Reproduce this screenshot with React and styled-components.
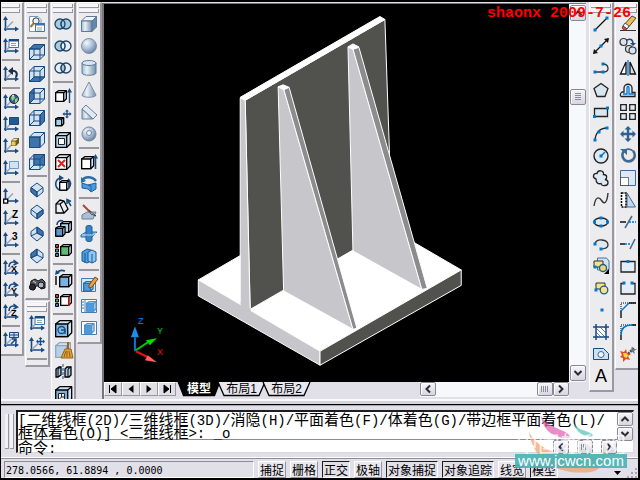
import React from "react";
import styled, { createGlobalStyle } from "styled-components";

const GlobalStyle = createGlobalStyle`
  * {
    box-sizing: border-box;
  }
  body {
    margin: 0;
    background: #000;
    font-family: "Liberation Sans", "Noto Sans CJK SC", sans-serif;
  }
  button {
    font: inherit;
    color: inherit;
    padding: 0;
    margin: 0;
  }
`;

const Window = styled.div`
  position: relative;
  display: flex;
  flex-direction: column;
  width: 100%;
  height: 100vh;
  border: solid #000;
  border-width: 2px 2px 2px 1px;
  background: #e1dfe8;
  color: #000;
  overflow: hidden;
`;

const Workspace = styled.main`
  flex: 1;
  min-height: 0;
  display: flex;
`;

const Dock = styled.aside`
  display: flex;
  align-items: flex-start;
  gap: 1px;
  min-height: 0;
`;

const DockColumn = styled.div`
  display: flex;
  flex-direction: column;
  gap: 1px;
  max-height: 100%;
  overflow: hidden;
`;

const ToolbarFrame = styled.div`
  width: ${(props) => (props.$edge ? "23px" : "25px")};
  padding: ${(props) =>
    props.$edge === "left"
      ? "0 1px 3px 0"
      : props.$edge === "right"
      ? "0 0 3px 1px"
      : "0 0 3px"};
  background: #ecebee;
  border: solid;
  border-color: #fff #9b999f #9b999f #fff;
  border-width: 1px 2px 2px 1px;
  border-left-width: ${(props) => (props.$edge === "left" ? "0" : "1px")};
  border-right-width: ${(props) => (props.$edge === "right" ? "0" : "2px")};
`;

const Gripper = styled.div`
  height: 10px;
  padding-top: 1px;

  &::before,
  &::after {
    content: "";
    display: block;
    height: 3px;
    margin: 0 1px 1px;
    background: #f6f6f8;
    border: solid #98969c;
    border-width: 0 1px 1px 0;
  }
`;

const ToolButton = styled.button`
  display: flex;
  align-items: center;
  justify-content: center;
  width: 100%;
  height: 22px;
  border: 0;
  background: transparent;

  svg {
    flex: none;
    width: 16px;
    height: 16px;
    overflow: visible;
  }
`;

const Separator = styled.hr`
  height: 2px;
  margin: 2px 1px;
  border: solid;
  border-width: 1px 0;
  border-color: #98969c #fff;
`;

const Viewport = styled.section`
  flex: 1;
  min-width: 0;
  display: flex;
  flex-direction: column;
  margin: 1px 3px 0 0;
  padding-bottom: 2px;
  border: solid #77747c;
  border-width: 1px 0 0 2px;
`;

const DrawingRow = styled.div`
  flex: 1;
  min-height: 0;
  display: flex;
`;

const Drawing = styled.div`
  flex: 1;
  min-width: 0;
  background: #000;
  border-left: 1px solid #000;

  svg {
    display: block;
    width: 100%;
    height: 100%;
  }
`;

const ScrollTrack = styled.div`
  display: flex;
  flex-direction: ${(props) => (props.$vertical ? "column" : "row")};
  justify-content: space-between;
  width: ${(props) => (props.$vertical ? "17px" : "auto")};
  padding: ${(props) => (props.$vertical ? "1px 0 1px 1px" : "0")};
  background: #f7f8fb;
`;

const ScrollButton = styled.button`
  display: flex;
  align-items: center;
  justify-content: center;
  width: 16px;
  height: ${(props) => (props.$short ? "14px" : "16px")};
  border: 1px solid #8b8895;
  border-radius: 2px;
  background: linear-gradient(#f5f4f9, #d8d5df);
  box-shadow: inset 1px 1px #fff;

  svg {
    width: 10px;
    height: 10px;
  }
`;

const ThumbSpace = styled.div`
  flex: 1;
  display: flex;
  align-items: flex-start;
  padding-top: 68px;
`;

const TabRow = styled.div`
  display: flex;
  height: 15px;
`;

const TabNav = styled.button`
  width: 18px;
  height: 14px;
  border: 1px solid;
  border-color: #fff #98969e #98969e #fff;
  background: #e1dfe6;

  svg {
    display: block;
    width: 16px;
    height: 12px;
  }
`;

const Tabs = styled.div`
  display: flex;
  flex: 1;
  padding-left: 3px;
`;

const TabButton = styled.button`
  position: relative;
  width: ${(props) => (props.$active ? "40px" : "45px")};
  height: 14px;
  border: 0;
  background: transparent;
  font-size: 12px;
  line-height: 12px;
  font-weight: ${(props) => (props.$active ? "700" : "400")};
  color: ${(props) => (props.$active ? "#fff" : "#000")};
  white-space: nowrap;

  svg {
    position: absolute;
    inset: 0;
    width: 100%;
    height: 100%;
    overflow: visible;
  }

  span {
    position: relative;
  }
`;

const HorizontalScroll = styled(ScrollTrack)`
  width: 31%;
  margin-right: 17px;
`;

const Splitter = styled.div`
  height: 6px;
  border: solid;
  border-width: 2px 0 1px;
  border-color: #fbfbfd transparent #000;
  background: #d4d2da;
`;

const CommandPanel = styled.section`
  display: flex;
  align-items: stretch;
  height: 53px;
  padding: 4px;
  border-top: 1px solid #a6a3ad;
  border-bottom: 1px solid #fff;
`;

const CommandGrip = styled.div`
  display: flex;
  gap: 1px;
  width: 11px;
  padding: 4px 2px 4px 0;

  &::before,
  &::after {
    content: "";
    width: 4px;
    background: #f2f1f5;
    border: solid #98969c;
    border-width: 0 1px 1px 0;
  }
`;

const CommandBox = styled.div`
  flex: 1;
  min-width: 0;
  display: flex;
  background: #fff;
  border: solid;
  border-width: 2px 1px 1px 2px;
  border-color: #1d1c20 #d8d6de #d8d6de #1d1c20;
`;

const CommandText = styled.div`
  flex: 1;
  min-width: 0;
  font-family: "Noto Sans CJK SC", sans-serif;
  font-size: 15px;
  line-height: 13px;
  white-space: nowrap;
`;

const History = styled.div`
  border-bottom: 1px solid #8c8a90;
  padding-bottom: 1px;
`;

const HistoryLine = styled.div`
  height: 13px;
`;

const Ascii = styled.span`
  font-family: "Liberation Mono", monospace;
  font-size: 14px;
  line-height: 0;
  white-space: pre;
`;

const Prompt = styled.div`
  display: flex;
  align-items: flex-start;

  label {
    flex: none;
  }

  input {
    flex: 1;
    min-width: 0;
    height: 13px;
    border: 0;
    padding: 0;
    outline: 0;
    background: transparent;
  }
`;

const PromptScroll = styled.div`
  display: flex;
  justify-content: space-between;
  width: 64px;
`;

const CommandScroll = styled.div`
  width: 16px;
  display: flex;
  flex-direction: column;
  gap: 1px;
`;

const StatusBar = styled.footer`
  display: flex;
  align-items: stretch;
  gap: 4px;
  height: 20px;
  padding: 2px 0 0 3px;
  border-top: 1px solid #8f8c96;
  font-family: "Noto Sans CJK SC", sans-serif;
  font-size: 12px;
  line-height: 14px;
`;

const Coordinates = styled.output`
  width: 250px;
  padding-left: 1px;
  border: 1px solid;
  border-color: #8f8c96 #fff #fff #8f8c96;
  font-family: "DejaVu Sans Mono", monospace;
  font-size: 10px;
  line-height: 17px;
  white-space: pre;
`;

const StatusToggle = styled.button`
  padding: 0 1px;
  border: solid;
  border-width: 1px;
  border-color: ${(props) =>
    props.$pressed ? "#1d1c20 #fff #fff #1d1c20" : "#fff #97949c #97949c #fff"};
  background: ${(props) => (props.$pressed ? "#e1dfe8" : "#eae8ee")};
  white-space: nowrap;
`;

const StatusEnd = styled.div`
  flex: 1;
  display: flex;
  justify-content: flex-end;
  align-items: flex-end;

  svg {
    width: 24px;
    height: 14px;
  }
`;

const DateStamp = styled.div`
  position: absolute;
  top: 4px;
  right: 7px;
  font-family: "Liberation Mono", monospace;
  font-size: 15px;
  line-height: 16px;
  font-weight: 700;
  color: #f00;
  pointer-events: none;
`;

const SiteMark = styled.div`
  position: absolute;
  right: 11px;
  bottom: 10px;
  width: 112px;
  pointer-events: none;

  svg {
    position: absolute;
    left: 14px;
    bottom: -10px;
    width: 96px;
    height: 62px;
  }
`;

const SiteName = styled.div`
  position: relative;
  font-family: "Noto Sans CJK SC", sans-serif;
  font-size: 22px;
  line-height: 24px;
  color: rgba(255, 255, 255, 0.75);
  text-align: center;
`;

const SiteAddress = styled.div`
  position: relative;
  height: 14px;
  background: rgba(72, 180, 182, 0.9);
  color: #fff;
  font-size: 15px;
  line-height: 14px;
  text-align: center;
`;

const NAVY = "#194a80";
const BLUE = "#3f74aa";
const PALE = "#d3e2f0";
const SKY = "#4a9be0";
const DOT = "#0078d0";

const Axes = ({ children }) => (
  <>
    <path d="M2.5 3v12M1 13h12" stroke={NAVY} strokeWidth="1.6" fill="none" />
    <path d="M0 4l2.5-4L5 4zM12 10.4l4 2.6-4 2.6z" fill={NAVY} />
    <path d="M3 12.5L10 5.5" stroke="#9aa8bc" strokeWidth="1.6" />
    {children}
  </>
);

const AxisLetter = ({ children }) => (
  <text
    x="9"
    y="8"
    fontFamily="Liberation Sans, sans-serif"
    fontSize="10"
    fontWeight="700"
  >
    {children}
  </text>
);

const AxisTurn = ({ letter }) => (
  <Axes>
    <path
      d="M6 7C6 2 10 1 13 3M10.5 0l4 3-4 2"
      stroke={NAVY}
      strokeWidth="1.5"
      fill="none"
    />
    <text
      x="8"
      y="12"
      fontFamily="Liberation Sans, sans-serif"
      fontSize="9"
      fontWeight="700"
    >
      {letter}
    </text>
  </Axes>
);

const Dialog = () => (
  <g>
    <path d="M6 1.5h9.5v8H6z" fill="#fff" stroke={BLUE} />
    <path d="M6 1h10v2.5H6z" fill={NAVY} />
    <path d="M8 5.5h5M8 7.5h5" stroke="#8aa" />
  </g>
);

const faces = {
  front: "M.5 5H11v10.5H.5z",
  back: "M5 .5h10.5V11H5z",
  top: "M.5 5L5 .5h10.5L11 5z",
  bottom: "M.5 15.5L5 11h10.5L11 15.5z",
  left: "M.5 5L5 .5V11L.5 15.5z",
  right: "M11 5L15.5.5V11L11 15.5z",
};

const ViewCube = ({ face }) => (
  <g stroke={NAVY} strokeLinejoin="round">
    <path d="M.5 5L5 .5h10.5V11L11 15.5H.5z" fill={PALE} />
    {face !== "front" && <path d="M5 .5V11h10.5M5 11L.5 15.5" fill="none" />}
    <path d={faces[face]} fill={BLUE} />
    <path d="M.5 5H11v10.5M11 5L15.5.5" fill="none" />
  </g>
);

const IsoCube = ({ turn }) => (
  <g stroke={NAVY} strokeLinejoin="round">
    <path d="M8 1l6 4.500v4.500l-6 5-6-5V5.500z" fill={PALE} />
    {turn === "sw" && <path d="M2 5.500l6 4.500v5l-6-5z" fill={BLUE} />}
    {turn === "se" && <path d="M14 5.500l-6 4.500v5l6-5z" fill={BLUE} />}
    {turn === "ne" && <path d="M8 1l6 4.500v4.500L8 7z" fill={BLUE} />}
    {turn === "nw" && <path d="M8 1L2 5.500v4.500l6-3z" fill={BLUE} />}
    <path
      d={turn[0] === "s" ? "M2 5.500l6 4.500 6-4.500M8 10v5" : "M2 10l6-3 6 3M8 7V1"}
      fill="none"
    />
  </g>
);

const Solid = ({ x = 0, y = 0, size = 10, fill = "#8fc0e8", color = "#000" }) => {
  const d = size / 3;
  return (
    <g stroke={color} strokeWidth="1.3" strokeLinejoin="round">
      <path
        d={`M${x + 0.7} ${y + d}l${d}-${d - 0.7}h${size}v${size}l-${d} ${d}h-${size}z`}
        fill={PALE}
      />
      <path d={`M${x + 0.7} ${y + d}h${size}v${size + 0.7}h-${size}z`} fill={fill} />
      <path d={`M${x + size + 0.7} ${y + d}l${d}-${d - 0.7}`} fill="none" />
    </g>
  );
};

const Rings = ({ left = "none", right = "none", lens = "none" }) => (
  <g stroke="#1b4668" strokeWidth="1.3">
    <circle cx="5" cy="8" r="5" fill={left} />
    <circle cx="11" cy="8" r="5" fill={right} />
    <path d="M8 4a5 5 0 010 8 5 5 0 010-8z" fill={lens} />
  </g>
);

const Dots = ({ points }) =>
  points.map(([x, y]) => (
    <rect key={`${x}-${y}`} x={x - 1.5} y={y - 1.5} width="3" height="3" fill={DOT} />
  ));

const FourWay = ({ x = 8, y = 8, r = 7, color = NAVY }) => (
  <g transform={`translate(${x} ${y}) scale(${r / 8})`} fill={color}>
    <path d="M0-8l3.500 3.500H1.200v3.300h3.300V-3.500L8 0 4.500 3.500V1.200H1.200v3.300h2.300L0 8l-3.500-3.500h2.300V1.200h-3.300v2.300L-8 0l3.500-3.500v2.300h3.300v-3.300h-2.300z" />
  </g>
);

const Stack = () => (
  <>
    <path d="M.5 2.5h3v3h-3z" fill="#d23a3a" stroke="#000" />
    <path d="M.5 7h3v3h-3z" fill="#39b36b" stroke="#000" />
    <path d="M.5 11.5h3v3h-3z" fill="#2d7fc7" stroke="#000" />
  </>
);

const icons = {
  ucs: <Axes />,
  "ucs dialog": (
    <Axes>
      <Dialog />
    </Axes>
  ),
  "ucs previous": (
    <Axes>
      <path d="M13 11c2-4 0-7-5-6" stroke="#1c2f4a" strokeWidth="2" fill="none" />
      <path d="M5 5l5-4v8z" fill="#1c2f4a" />
    </Axes>
  ),
  "ucs world": (
    <Axes>
      <circle cx="11" cy="5" r="4.5" fill="#2b5f9c" stroke="#222" />
      <path d="M8 3l3-2 1 3-3 3zM12 5l3-1-1 4-2 1z" fill="#9ccf7a" />
      <path d="M9 2l2-1" stroke="#fff" />
    </Axes>
  ),
  "ucs object": (
    <Axes>
      <path d="M6.5 1.5h9v7h-9z" fill="#1e5c94" stroke={NAVY} />
    </Axes>
  ),
  "ucs face": (
    <Axes>
      <path d="M8 3l3-3h5v5l-3 3H8z" fill="#6b5a1e" />
      <path d="M8.5 3.5h4v4h-4z" fill="#e8cf60" />
      <path d="M9 2.5L11 .8h4l-2 1.7z" fill="#fbf0b0" />
    </Axes>
  ),
  "ucs view": (
    <Axes>
      <path d="M6.5 1.5h9v7h-9z" fill={PALE} stroke="#6d99c4" />
    </Axes>
  ),
  "ucs origin": (
    <Axes>
      <path d="M.7 11.2h4v4h-4z" fill="#fff" stroke="#000" strokeWidth="1.3" />
    </Axes>
  ),
  "ucs z vector": (
    <Axes>
      <AxisLetter>Z</AxisLetter>
    </Axes>
  ),
  "ucs 3 point": (
    <Axes>
      <AxisLetter>3</AxisLetter>
    </Axes>
  ),
  "rotate x": <AxisTurn letter="X" />,
  "rotate y": <AxisTurn letter="Y" />,
  "rotate z": <AxisTurn letter="Z" />,
  "ucs apply": (
    <Axes>
      <path d="M6.5.5h9v5h-9zM11 .5v5M6.5 3h9" fill={PALE} stroke={NAVY} />
      <path d="M8 12l5-5M9 7h4v4" stroke={NAVY} strokeWidth="1.5" fill="none" />
    </Axes>
  ),
  "named views": (
    <>
      <path d="M.5 15.5V.5H9L12 3.5v12z" fill="#fff" stroke="#7895b5" />
      <circle cx="7" cy="5" r="3.2" fill="#e6f0fa" stroke="#333" />
      <path d="M5 7L1.5 11" stroke="#a8742c" strokeWidth="2" />
      <path d="M6.5 7.5h9v8h-9z" fill="#fff" stroke={BLUE} />
      <path d="M6 7h10v2.5H6z" fill={BLUE} />
      <path d="M8 12h5M8 14h5" stroke="#8aa" />
    </>
  ),
  "top view": <ViewCube face="top" />,
  "bottom view": <ViewCube face="bottom" />,
  "left view": <ViewCube face="left" />,
  "right view": <ViewCube face="right" />,
  "front view": <ViewCube face="front" />,
  "back view": <ViewCube face="back" />,
  "sw isometric": <IsoCube turn="sw" />,
  "se isometric": <IsoCube turn="se" />,
  "ne isometric": <IsoCube turn="ne" />,
  "nw isometric": <IsoCube turn="nw" />,
  camera: (
    <g stroke="#111">
      <path d="M2 5l4-2 3 2 4-2 3 3v6l-4 1-2-3H7l-2 4-4-1z" fill="#555c66" />
      <circle cx="3.5" cy="11" r="3" fill="#252a30" />
      <circle cx="12" cy="9" r="3" fill="#aab4c0" />
      <path d="M4 5l3 2" stroke="#ccd" />
    </g>
  ),
  "ucs move": (
    <Axes>
      <FourWay x={11.5} y={4.5} r={4.5} />
    </Axes>
  ),
  union: <Rings left="#a9cbe0" right="#a9cbe0" lens="#a9cbe0" />,
  subtract: <Rings left="#a9cbe0" lens="#eef2f6" />,
  intersect: <Rings lens="#a9cbe0" />,
  "extrude faces": (
    <>
      <Solid y={2} size={8} fill="#fff" />
      <path d="M14.5 15V3" stroke={NAVY} strokeWidth="1.4" />
      <path d="M12 4.5L14.5 0 17 4.5z" fill={NAVY} />
    </>
  ),
  "move faces": (
    <>
      <Solid y={7} size={6} fill="#a8d0ee" />
      <FourWay x={12} y={4} r={4.5} />
    </>
  ),
  "offset faces": (
    <>
      <Solid size={11} fill="#b8d6ee" />
      <path d="M3.5 6.5h6v6h-6z" fill="#fff" stroke="#222" />
    </>
  ),
  "delete faces": (
    <>
      <Solid size={11} fill="#fff" />
      <path d="M3 6l7 7M10 6l-7 7" stroke="#d22" strokeWidth="2" />
    </>
  ),
  "rotate faces": (
    <>
      <Solid x={4} y={4} size={7} fill="#fff" />
      <path d="M4 14C-1 10 0 4 5 2M13 13c4-4 3-8 0-10" stroke={NAVY} strokeWidth="1.6" fill="none" />
      <path d="M4-1l5 3-5 3z" fill={NAVY} />
    </>
  ),
  "taper faces": (
    <>
      <path d="M1 6l4-4 4 1 4 8-4 4H1z" fill="#e8eef4" stroke="#000" strokeWidth="1.3" />
      <path d="M1 6h4l4 9M5 6l4-3" fill="none" stroke="#000" strokeWidth="1.2" />
      <path d="M16 8l-3-5M12 6V1.5l4 2" stroke={NAVY} strokeWidth="1.5" fill="none" />
    </>
  ),
  "copy faces": (
    <>
      <Solid x={5} y={1} size={8} fill="#b4d4ec" />
      <Solid x={0} y={6} size={7} fill="#5f98c8" />
      <path d="M2 5c0-4 3-5 6-4" stroke={NAVY} strokeWidth="1.6" fill="none" />
    </>
  ),
  "color faces": (
    <>
      <Stack />
      <Solid x={5} y={2} size={8} fill="#5cba74" />
    </>
  ),
  "copy edges": (
    <>
      <Solid x={4} y={4} size={9} fill="#76b2e4" />
      <path d="M1 15V6" stroke="#000" strokeWidth="1.4" />
      <path d="M2 3c2-3 5-3 8-2" stroke={NAVY} strokeWidth="1.8" fill="none" />
      <path d="M0 5l1-5 4 3z" fill={NAVY} />
    </>
  ),
  "color edges": (
    <>
      <Stack />
      <Solid x={5} y={2} size={8} fill="#fff" />
      <path d="M14 5v9" stroke="#e02020" strokeWidth="1.4" />
    </>
  ),
  imprint: (
    <>
      <Solid size={12} fill="#84bce8" />
      <circle cx="6.5" cy="10" r="3.5" fill="none" stroke={NAVY} strokeWidth="1.3" />
      <path d="M6 10h4v4" fill="none" stroke={NAVY} strokeWidth="1.3" />
    </>
  ),
  clean: (
    <>
      <Solid size={11} fill="#b8cfe6" color="#8fa7c2" />
      <path d="M12 0h2v7h-2z" fill="#a9601c" />
      <path d="M10 7h6l2 9H6z" fill="#e0a43a" stroke="#93601a" />
      <path d="M9 15l2-6M12 15V9M15 15l-1-6" stroke="#93601a" />
    </>
  ),
  separate: (
    <>
      <path d="M1 5l3-2h2v8l-3 2H1zM10 5l2-2h4v8l-2 2h-4z" fill="#a5c8e6" stroke="#000" strokeWidth="1.3" />
      <path d="M3 13V5l3-2M13 13V5l3-2" fill="none" stroke="#000" />
      <path d="M8 0v16" stroke={NAVY} strokeDasharray="3 1" />
    </>
  ),
  shell: (
    <>
      <Solid size={12} fill="#7fb0dc" />
      <path d="M3.5 7.5h6V14h-6z" fill="#eee" stroke="#222" />
      <path d="M3.5 14l3-3h3M6.5 11V7.5" fill="none" stroke="#222" />
    </>
  ),
  box: (
    <g stroke="#5f7894" strokeLinejoin="round">
      <path d="M.5 5L5 .5h10.500L11 5z" fill="#eef4fa" />
      <path d="M.5 5H11v10.500H.5z" fill="url(#steel)" />
      <path d="M11 5L15.500.5V11L11 15.500z" fill="#6488ac" />
    </g>
  ),
  sphere: <circle cx="8" cy="8" r="7.5" fill="url(#ball)" stroke="#7d90a8" />,
  cylinder: (
    <g stroke="#627a95">
      <path d="M1 3v10c0 3 14 3 14 0V3z" fill="url(#steel)" />
      <ellipse cx="8" cy="3" rx="7" ry="2.5" fill="#d9e6f2" />
    </g>
  ),
  cone: <path d="M8 0L1 13c0 3 14 3 14 0z" fill="url(#steel)" stroke="#7a8ea6" />,
  wedge: (
    <g stroke="#6c8098" strokeLinejoin="round">
      <path d="M1 5l4-4 11 10-4 4z" fill="#dfe9f3" />
      <path d="M1 5l11 10H1z" fill="url(#steel)" />
    </g>
  ),
  torus: (
    <g stroke="#7388a0">
      <circle cx="8" cy="8" r="7" fill="url(#ball)" />
      <circle cx="8" cy="7" r="2.5" fill="#eef1f5" />
    </g>
  ),
  extrude: (
    <>
      <Solid y={2} size={9} fill="#fff" />
      <path d="M14.5 15V3" stroke={NAVY} strokeWidth="1.6" />
      <path d="M12 4.5L14.5 0 17 4.5z" fill={NAVY} />
    </>
  ),
  revolve: (
    <>
      <path d="M1 5c2-5 10-5 14 0" fill="none" stroke="#2b6da8" strokeWidth="2.5" />
      <path d="M1 7l6 2 8-2v6l-5 3-3-3-6-1z" fill={SKY} stroke="#245f9a" />
      <path d="M7 9l3 1v5" fill="none" stroke="#245f9a" />
      <path d="M0 1v6l5-2z" fill="#2b6da8" />
    </>
  ),
  slice: (
    <>
      <path d="M1 11l5-3h9l-3 7H1z" fill="#aac0d6" stroke="#68809a" />
      <path d="M2 1l7 7" stroke="#a34a3c" strokeWidth="2" />
      <path d="M8 6l7 6-5-2z" fill="#eee" stroke="#444" />
    </>
  ),
  section: (
    <>
      <path d="M0 9l5-3h11l-5 5H0z" fill="#6fb2ea" stroke="#316c9f" />
      <path d="M5 1c0-2 6-2 6 0v13c0 2-6 2-6 0z" fill="#3682c6" stroke="#235c92" />
      <path d="M1 9h11l3-2" fill="none" stroke="#b9dcf7" />
    </>
  ),
  interfere: (
    <g stroke="#1e5a92">
      <path d="M1 4l5-3 4 1v11l-4 2-5-2z" fill="#4a9be0" />
      <path d="M7 4l4-2 4 2v9l-4 2-4-2z" fill="#8cc6f4" />
      <path d="M4 5v10M11 6v9" fill="none" />
    </g>
  ),
  "setup drawing": (
    <>
      <path d="M.5 2.5h14v13H.5z" fill="#d7e8f6" stroke="#4a7bae" />
      <Solid x={2} y={5} size={7} fill={SKY} color="#2b6da8" />
      <path d="M8 9l6-8 3 2-6 8-3 1z" fill="#e7a23c" stroke="#7c4a16" />
    </>
  ),
  "setup view": (
    <>
      <path d="M.5 1.5h15v13H.5zM4 1.5v13" fill="#fff" stroke="#4a7bae" />
      <path d="M1 4h2M1 7h2M1 10h2" stroke="#4a7bae" />
      <Solid x={5} y={3} size={7} fill={SKY} color="#4d92cf" />
    </>
  ),
  "setup profile": (
    <>
      <path d="M.5 1.5h15v13H.5z" fill="#fff" stroke="#4a7bae" />
      <Solid x={3} y={3} size={7} fill={SKY} color="#4d92cf" />
    </>
  ),
  line: (
    <>
      <path d="M2 14L14 2" stroke="#111" strokeWidth="1.2" />
      <Dots points={[[2, 14], [14, 2]]} />
    </>
  ),
  "construction line": (
    <>
      <path d="M1 15L15 1" stroke="#111" strokeWidth="1.2" />
      <path d="M0 16l1-5 4 4zM16 0l-5 1 4 4z" fill="#111" />
      <Dots points={[[8, 8]]} />
    </>
  ),
  polyline: (
    <>
      <path d="M2 12h9c6 0 5-8-1-8" stroke="#333" strokeWidth="1.3" fill="none" />
      <Dots points={[[2, 12], [10, 12], [10, 4]]} />
    </>
  ),
  polygon: (
    <path d="M8 1.5l7 5-3 8H4l-3-8z" fill="#d8e6f0" stroke="#222" strokeWidth="1.3" />
  ),
  rectangle: (
    <>
      <path d="M1.5 4.5h13v8h-13z" fill="#dbe8f2" stroke="#222" strokeWidth="1.3" />
      <Dots points={[[1.5, 12.5], [14.5, 4]]} />
    </>
  ),
  arc: (
    <>
      <path d="M2 15C2 7 7 2 14 2" fill="none" stroke="#222" strokeWidth="1.3" />
      <Dots points={[[2, 14], [6, 6], [14, 2]]} />
    </>
  ),
  circle: (
    <>
      <circle cx="8" cy="8" r="7" fill="#dce8f2" stroke="#222" strokeWidth="1.4" />
      <path d="M8 8l4-4" stroke={DOT} strokeWidth="1.5" />
      <Dots points={[[8, 8]]} />
    </>
  ),
  "revision cloud": (
    <path
      d="M3 9C-1 8 0 3 4 3.500 5-.5 11 0 10.500 4.500c4 0 4 4 1.500 5 4 .5 4 6 0 6-2 .5-4-.5-4-2-3 1-5-1-5-4.500z"
      fill="#dce8f2"
      stroke="#222"
      strokeWidth="1.3"
    />
  ),
  spline: (
    <path d="M1 14C3 2 7 6 9 9s5 3 6-8" fill="none" stroke="#333" strokeWidth="1.4" />
  ),
  ellipse: (
    <>
      <ellipse cx="8" cy="8" rx="7" ry="4" fill="#dce8f2" stroke="#222" strokeWidth="1.3" />
      <Dots points={[[1.5, 8], [8, 4], [14.5, 8], [8, 12]]} />
    </>
  ),
  "ellipse arc": (
    <>
      <path d="M2 8c1-6 13-5 13 1 0 3-4 4-8 4" fill="#dce8f2" stroke="#333" strokeWidth="1.3" />
      <Dots points={[[2, 8], [8, 13]]} />
    </>
  ),
  "insert block": (
    <>
      <path d="M4.5 0h9L16 3v9H4.5z" fill={PALE} stroke={BLUE} />
      <path d="M1 3h9v6H1z" fill="#f3e38a" stroke="#333" />
      <circle cx="10" cy="10" r="3.5" fill="#e9d96a" stroke="#245a8c" strokeWidth="1.3" />
      <path d="M16 11v5h-5z" />
      <Dots points={[[2, 9]]} />
    </>
  ),
  "make block": (
    <>
      <path d="M3 3h9v6H3z" fill="#f3e38a" stroke="#333" />
      <circle cx="11" cy="10" r="3.8" fill="#f3e38a" stroke="#245a8c" strokeWidth="1.3" />
      <Dots points={[[3, 10]]} />
    </>
  ),
  point: <Dots points={[[9, 8]]} />,
  hatch: (
    <>
      <path d="M3 3h10v10H3z" fill="#fff" />
      <path d="M3 8l5 5M3 4l9 9M7 3l6 6M3 11l2 2M11 3l2 2" stroke="#5c87b3" />
      <path d="M3 0v16M13 0v16M0 3h16M0 13h16" stroke={NAVY} strokeWidth="1.5" />
    </>
  ),
  region: (
    <>
      <path d="M.5 2.5h10l5 5v6H.5z" fill="#cfe0ef" stroke={NAVY} />
      <circle cx="8" cy="8.5" r="3" fill="#f2f4f8" stroke="#40688f" />
    </>
  ),
  text: (
    <text
      x="8"
      y="14"
      textAnchor="middle"
      fontFamily="Liberation Sans, sans-serif"
      fontSize="18"
    >
      A
    </text>
  ),
  erase: (
    <>
      <path d="M0 14.5h16" stroke="#333" />
      <path d="M3 10L12 0l4 2-9 11z" fill="#e9c25c" stroke="#604020" />
      <path d="M3 10l2-3 4 3-2 3z" fill="#fff" stroke="#555" />
      <path d="M3 10c-2 3 1 5 4 3z" fill="#dd5656" stroke="#733" />
    </>
  ),
  copy: (
    <g stroke="#333" strokeWidth="1.2">
      <circle cx="3.5" cy="4" r="3.5" fill="#d8e5f0" />
      <circle cx="9" cy="11" r="3.5" fill="#d8e5f0" />
      <circle cx="12.5" cy="12.5" r="3.5" fill="#d8e5f0" />
      <path d="M7 2c4-2 6 0 6 4" stroke={NAVY} strokeWidth="1.6" fill="none" />
      <path d="M10 5h6l-3 3z" fill={NAVY} stroke="none" />
    </g>
  ),
  mirror: (
    <g strokeWidth="1.3">
      <path d="M6 2v12H.5z" fill="#fff" stroke="#111" />
      <path d="M10 2v12h5.500z" fill="#cfe0ee" stroke="#111" />
      <path d="M8 0v16" stroke={DOT} />
    </g>
  ),
  offset: (
    <g fill="none" strokeWidth="1.3">
      <path d="M1 14.5h14v-4h-3V6c0-5-8-5-8 0v4H2c-2 1-2 4-1 4.500z" stroke="#222" fill="#e3edf7" />
      <path d="M3 12h4V6c0-2 2-2 2 0v6h5" stroke={DOT} />
    </g>
  ),
  array: (
    <path
      d="M.7.7h5.600v5.600H.7zM9.700.7h5.600v5.600H9.700zM.7 9.700h5.600v5.600H.7zM9.700 9.700h5.600v5.600H9.700z"
      fill="#dfeaf3"
      stroke="#222"
      strokeWidth="1.3"
    />
  ),
  move: <FourWay r={8} color="#2f6091" />,
  rotate: (
    <>
      <path d="M4 3a6.200 6.200 0 109-.2" fill="none" stroke="#3f6a94" strokeWidth="2.6" />
      <path d="M4 3C7 0 11 1 13 3" fill="none" stroke="#3f6a94" strokeWidth="1.6" />
      <path d="M0 1h7v6z" fill="#3f6a94" />
    </>
  ),
  scale: (
    <>
      <path d="M.5.5h15v15H.5z" fill="#dce8f4" stroke="#3f6a94" />
      <path d="M.5 7.5h8v8h-8z" fill="#fff" stroke="#000" strokeDasharray="1 1" />
    </>
  ),
  stretch: (
    <>
      <path d="M7 1l8.500 14H7z" fill="#c3d9eb" stroke="#3f6a94" />
      <path d="M1.5 1H6v14H1.500z" fill="#fff" stroke="#000" strokeWidth="1.5" strokeDasharray="2 1" />
    </>
  ),
  trim: (
    <>
      <path d="M0 8h6" stroke="#111" strokeWidth="1.5" />
      <path d="M9 8h7" stroke={DOT} strokeWidth="1.5" strokeDasharray="2 1" />
      <path d="M5 14L12 2" stroke="#3f6a94" strokeWidth="1.5" />
    </>
  ),
  extend: (
    <>
      <path d="M0 8h5" stroke="#111" strokeWidth="1.5" />
      <path d="M5 8h6" stroke={DOT} strokeWidth="1.5" strokeDasharray="2 1" />
      <path d="M10 13l5-10" stroke="#3f6a94" strokeWidth="1.5" />
    </>
  ),
  "break at point": (
    <>
      <path d="M1 3.5h14V14H1z" fill="#e3edf7" stroke="#222" strokeWidth="1.3" />
      <Dots points={[[8, 3.5]]} />
    </>
  ),
  break: (
    <>
      <path d="M4 3.5H1V14h14V3.500h-3" fill="#e3edf7" stroke="#222" strokeWidth="1.3" />
      <Dots points={[[4, 3], [12, 3]]} />
    </>
  ),
  chamfer: (
    <>
      <path d="M1 9V1h15" fill="none" stroke="#000" strokeDasharray="1 1" />
      <path d="M1 16V9M9 1h7" stroke="#111" strokeWidth="1.4" />
      <path d="M1 9l8-8" stroke={DOT} strokeWidth="1.5" />
    </>
  ),
  fillet: (
    <>
      <path d="M1 9V1h15" fill="none" stroke="#000" strokeDasharray="1 1" />
      <path d="M1 16v-5M12 1h4" stroke="#111" strokeWidth="1.4" />
      <path d="M1 11C1 4 5 1 12 1" fill="none" stroke={DOT} strokeWidth="1.7" />
    </>
  ),
  explode: (
    <>
      <path d="M6 10l8-8" stroke="#444" strokeWidth="2.5" strokeDasharray="2 1" />
      <path d="M12 0l1 3h4l-3 2 1 3-4-3z" fill="#6c7580" />
      <path d="M0 5l4 1 2-3 1 4 4 1-3 2 2 4-4-1-3 3v-4l-3-1 2-2z" fill="#e24a20" />
      <path d="M3 7h3l2 2-1 3-3-1z" fill="#ffd54a" />
    </>
  ),
};

const ucsTools = [
  "ucs", "ucs dialog", "|", "ucs previous", "|", "ucs world", "ucs object",
  "ucs face", "ucs view", "|", "ucs origin", "ucs z vector", "ucs 3 point", "|",
  "rotate x", "rotate y", "rotate z", "|", "ucs apply",
];

const viewTools = [
  "named views", "|", "top view", "bottom view", "left view", "right view",
  "front view", "back view", "|", "sw isometric", "se isometric",
  "ne isometric", "nw isometric", "|", "camera",
];

const ucs2Tools = ["ucs dialog", "ucs move", "|"];

const solidEditTools = [
  "union", "subtract", "intersect", "|", "extrude faces", "move faces",
  "offset faces", "delete faces", "rotate faces", "taper faces", "copy faces",
  "color faces", "|", "copy edges", "color edges", "|", "imprint", "clean",
  "separate", "shell",
];

const solidTools = [
  "box", "sphere", "cylinder", "cone", "wedge", "torus", "|", "extrude",
  "revolve", "|", "slice", "section", "interfere", "|", "setup drawing",
  "setup view", "setup profile",
];

const drawTools = [
  "line", "construction line", "polyline", "polygon", "rectangle", "arc",
  "circle", "revision cloud", "spline", "ellipse", "ellipse arc",
  "insert block", "make block", "point", "hatch", "region", "text",
];

const modifyTools = [
  "erase", "copy", "mirror", "offset", "array", "move", "rotate", "scale",
  "stretch", "trim", "extend", "break at point", "break", "chamfer", "fillet",
  "explode",
];

const statusToggles = [
  { label: "捕捉" },
  { label: "栅格" },
  { label: "正交", pressed: true },
  { label: "极轴" },
  { label: "对象捕捉", pressed: true },
  { label: "对象追踪", pressed: true },
  { label: "线宽" },
  { label: "模型", pressed: true },
];

const Toolbar = ({ tools, edge }) => (
  <ToolbarFrame $edge={edge} role="toolbar">
    <Gripper />
    {tools.map((name, i) =>
      name === "|" ? (
        <Separator key={i} />
      ) : (
        <ToolButton key={i} type="button" aria-label={name}>
          <svg viewBox="0 0 16 16">{icons[name]}</svg>
        </ToolButton>
      )
    )}
  </ToolbarFrame>
);

const arrows = {
  up: "M1.5 7L5 3.5 8.5 7",
  down: "M1.5 3L5 6.5 8.5 3",
  left: "M7 1.5L3.5 5 7 8.5",
  right: "M3 1.5L6.5 5 3 8.5",
};

const Arrow = ({ to, short }) => (
  <ScrollButton type="button" $short={short} aria-label={`scroll ${to}`}>
    <svg viewBox="0 0 10 10">
      <path d={arrows[to]} fill="none" stroke="#2c2b33" strokeWidth="2" />
    </svg>
  </ScrollButton>
);

const Thumb = ({ vertical, short }) => (
  <ScrollButton type="button" $short={short} aria-label="scroll thumb">
    <svg viewBox="0 0 10 10">
      <path
        d={
          vertical
            ? "M2 1.5h6M2 3.5h6M2 5.5h6M2 7.5h6"
            : "M1.5 2v6M3.5 2v6M5.5 2v6M7.5 2v6"
        }
        stroke="#8a8b9c"
      />
    </svg>
  </ScrollButton>
);

const Bracket = () => (
  <svg viewBox="105 4 465 379" preserveAspectRatio="xMinYMin slice">
    <g stroke="#fff" strokeLinejoin="round">
      <path d="M198.5 280.5L339 199 462 270.5 320.5 352z" fill="#fff" />
      <path d="M198.5 280.5L320.5 352v14L198.5 296.5z" fill="#c7c6ca" />
      <path d="M320.5 352L462 270.5V286L320.5 366z" fill="#51524e" />
      <path d="M245.5 100.5L385.5 19.5 390 150 391 229 250.5 310z" fill="#51524e" />
      <path d="M240.5 98l5 2.5 5 210-10-5.5z" fill="#c7c6ca" />
      <path d="M240.5 97.5L380.5 16.5l5 3-140 81z" fill="#fff" />
      <path d="M278.5 87l5.5 2 69.5 241-69.5-38.5z" fill="#c7c6ca" />
      <path d="M284 89l5.5-1.5L357.5 329l-4 1z" fill="#8c8c8e" />
      <path d="M278.5 87l5-2 6 2.5-5.5 2.5z" fill="#fff" />
      <path d="M348.5 47l5 2L422.5 290l-69-38.5z" fill="#c7c6ca" />
      <path d="M353.5 49l6-1.5L428 289l-5.5 1z" fill="#8c8c8e" />
      <path d="M348.5 47l5-3 6 3-6 2.5z" fill="#fff" />
    </g>
    <path d="M241 303v6l10 5v-5z" fill="#c7c6ca" />
    <g strokeWidth="2">
      <path d="M135 352v-14" stroke="#0878d8" />
      <path d="M135 327l4 11h-8z" fill="#1f8cec" />
      <path d="M136 351l12-8" stroke="#00d000" />
      <path d="M157 339l-7 7-4-5z" fill="#00e000" />
      <path d="M136 352l12 6" stroke="#e81010" />
      <path d="M157 363l-12-2 3-5z" fill="#ff6060" />
    </g>
    <g fontFamily="Liberation Sans, sans-serif" fontSize="9">
      <text x="138" y="325" fill="#0a84ff">Z</text>
      <text x="157" y="335" fill="#00d800">Y</text>
      <text x="157" y="356" fill="#f01010">X</text>
    </g>
  </svg>
);

// splits a line so that the latin runs use the fixed-width face
const Mixed = ({ text }) =>
  text
    .split(/([\x20-\x7e]+)/)
    .map((part, i) => (i % 2 ? <Ascii key={i}>{part}</Ascii> : part));

const navShapes = [
  "M4.5 2v8M11 2v8L6 6z",
  "M10.5 2v8L5.5 6z",
  "M5.5 2v8l5-4z",
  "M5 2v8l5-4zM11.5 2v8",
];
const navNames = ["first tab", "previous tab", "next tab", "last tab"];

const LayoutTab = ({ label, active }) => (
  <TabButton type="button" $active={active}>
    <svg viewBox="0 0 45 14" preserveAspectRatio="none">
      <path
        d="M-1 0l6 13.5h35L46 0"
        fill={active ? "#000" : "#e8e6ee"}
        stroke="#000"
        strokeWidth="1.3"
      />
    </svg>
    <span>{label}</span>
  </TabButton>
);

const Gradients = () => (
  <svg width="0" height="0" style={{ position: "absolute" }} aria-hidden="true">
    <defs>
      <linearGradient id="steel">
        <stop offset="0" stopColor="#9eb9d3" />
        <stop offset=".35" stopColor="#e9f1f8" />
        <stop offset="1" stopColor="#6f8eae" />
      </linearGradient>
      <radialGradient id="ball" cx=".35" cy=".3" r=".75">
        <stop offset="0" stopColor="#f4f8fc" />
        <stop offset=".5" stopColor="#adc2d8" />
        <stop offset="1" stopColor="#62809f" />
      </radialGradient>
    </defs>
  </svg>
);

const App = () => {
  return (
    <>
      <GlobalStyle />
      <Window>
        <Gradients />
        <Workspace>
          <Dock>
            <DockColumn>
              <Toolbar tools={ucsTools} edge="left" />
            </DockColumn>
            <DockColumn>
              <Toolbar tools={viewTools} />
              <Toolbar tools={ucs2Tools} />
            </DockColumn>
            <DockColumn>
              <Toolbar tools={solidEditTools} />
            </DockColumn>
            <DockColumn>
              <Toolbar tools={solidTools} />
            </DockColumn>
          </Dock>

          <Viewport>
            <DrawingRow>
              <Drawing>
                <Bracket />
              </Drawing>
              <ScrollTrack $vertical>
                <Arrow to="up" />
                <ThumbSpace>
                  <Thumb vertical />
                </ThumbSpace>
                <Arrow to="down" />
              </ScrollTrack>
            </DrawingRow>
            <TabRow>
              {navShapes.map((shape, i) => (
                <TabNav key={shape} type="button" aria-label={navNames[i]}>
                  <svg viewBox="0 0 16 12">
                    <path d={shape} stroke={i % 3 ? "none" : "#000"} />
                  </svg>
                </TabNav>
              ))}
              <Tabs>
                <LayoutTab label="模型" active />
                <LayoutTab label="布局1" />
                <LayoutTab label="布局2" />
              </Tabs>
              <HorizontalScroll>
                <Arrow to="left" short />
                <div style={{ flex: 1 }} />
                <Thumb short />
                <Arrow to="right" short />
              </HorizontalScroll>
            </TabRow>
          </Viewport>

          <Dock>
            <DockColumn>
              <Toolbar tools={drawTools} />
            </DockColumn>
            <DockColumn>
              <Toolbar tools={modifyTools} edge="right" />
            </DockColumn>
          </Dock>
        </Workspace>

        <Splitter />

        <CommandPanel>
          <CommandGrip />
          <CommandBox>
            <CommandText>
              <History>
                <HistoryLine>
                  <Mixed text="[二维线框(2D)/三维线框(3D)/消隐(H)/平面着色(F)/体着色(G)/带边框平面着色(L)/" />
                </HistoryLine>
                <HistoryLine>
                  <Mixed text="框体着色(O)] <二维线框>: _o" />
                </HistoryLine>
              </History>
              <Prompt>
                <label htmlFor="command">
                  <Mixed text="命令:" />
                </label>
                <input id="command" type="text" />
                <PromptScroll>
                  <Arrow to="left" short />
                  <Thumb short />
                  <Arrow to="right" short />
                </PromptScroll>
              </Prompt>
            </CommandText>
            <CommandScroll>
              <Arrow to="up" short />
              <Arrow to="down" short />
            </CommandScroll>
          </CommandBox>
        </CommandPanel>

        <StatusBar>
          <Coordinates>278.0566, 61.8894 , 0.0000</Coordinates>
          {statusToggles.map(({ label, pressed }) => (
            <StatusToggle
              key={label}
              type="button"
              $pressed={pressed}
              aria-pressed={!!pressed}
            >
              {label}
            </StatusToggle>
          ))}
          <StatusEnd>
            <svg viewBox="0 0 24 14">
              <path d="M0 7h7L3.5 11z" />
              <path
                d="M21 4h2v2h-2zM17 8h2v2h-2zM21 8h2v2h-2zM13 12h2v2h-2zM17 12h2v2h-2zM21 12h2v2h-2z"
                fill="#a9a6b2"
              />
            </svg>
          </StatusEnd>
        </StatusBar>

        <DateStamp>shaonx 2009-7-26</DateStamp>
        <SiteMark>
          <svg viewBox="0 0 96 62">
            <path d="M0 16c4 28 28 44 62 40 12-2 14-14 14-20-24 8-62 6-76-20z" fill="#f0a070" opacity=".75" />
            <path d="M12 0c2 14 12 23 30 22-4-10-22-8-30-22z" fill="#e05cb0" opacity=".7" />
            <path d="M45 8c2 8 10 14 20 12-4-6-14-4-20-12z" fill="#5cc4bc" opacity=".75" />
          </svg>
          <SiteName>中国教程网</SiteName>
          <SiteAddress>www.jcwcn.com</SiteAddress>
        </SiteMark>
      </Window>
    </>
  );
};

export default App;
